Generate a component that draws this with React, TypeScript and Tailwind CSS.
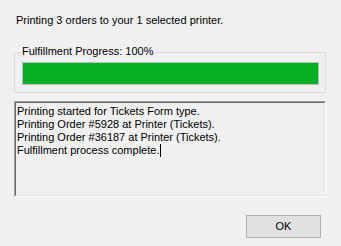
import React from 'react';

const lines = [
    'Printing started for Tickets Form type.',
    'Printing Order #5928 at Printer (Tickets).',
    'Printing Order #36187 at Printer (Tickets).',
    'Fulfillment process complete.',
];

export default function App() {
    const progress = 100;

    return (
        <div className="w-[341px] h-[246px] bg-[#f0f0f0] text-[11px] leading-[13px] text-black font-['Liberation_Sans',Arial,sans-serif] flex flex-col overflow-hidden">
            {/* Header */}
            <div className="mt-[14px] ml-[16px]">
                Printing {3} orders to your 1 selected printer.
            </div>

            {/* Group box */}
            <div className="relative mt-[25px] ml-[14px] w-[312px] h-[41px] border border-[#dcdcdc] pt-[9px] pl-[7px]">
                <span className="absolute -top-[8px] left-[6px] bg-[#f0f0f0] px-[1px]">
                    Fulfillment Progress: {progress}%
                </span>
                <div className="w-[297px] h-[23px] border border-[#bcbcbc] bg-[#e6e6e6]">
                    <div className="h-full bg-[#06b025]" style={{ width: `${progress}%` }} />
                </div>
            </div>

            {/* Log box */}
            <div className="mt-[8px] ml-[14px] w-[312px] h-[96px] border border-t-[#a0a0a0] border-l-[#a0a0a0] border-b-white border-r-white">
                <div className="h-full border border-t-[#696969] border-l-[#696969] border-b-[#e3e3e3] border-r-[#e3e3e3] pl-[1px] pt-[2px]">
                    {lines.map((line, i) => (
                        <div key={i} className="whitespace-nowrap">
                            {line}
                            {i === lines.length - 1 && (
                                <span className="inline-block w-px h-[13px] bg-black align-top ml-px" />
                            )}
                        </div>
                    ))}
                </div>
            </div>

            {/* Footer */}
            <div className="flex justify-end mt-[18px] mr-[20px]">
                <button className="w-[75px] h-[23px] border border-[#adadad] bg-[#e1e1e1] text-[11px] leading-none text-black">
                    OK
                </button>
            </div>
        </div>
    );
}
